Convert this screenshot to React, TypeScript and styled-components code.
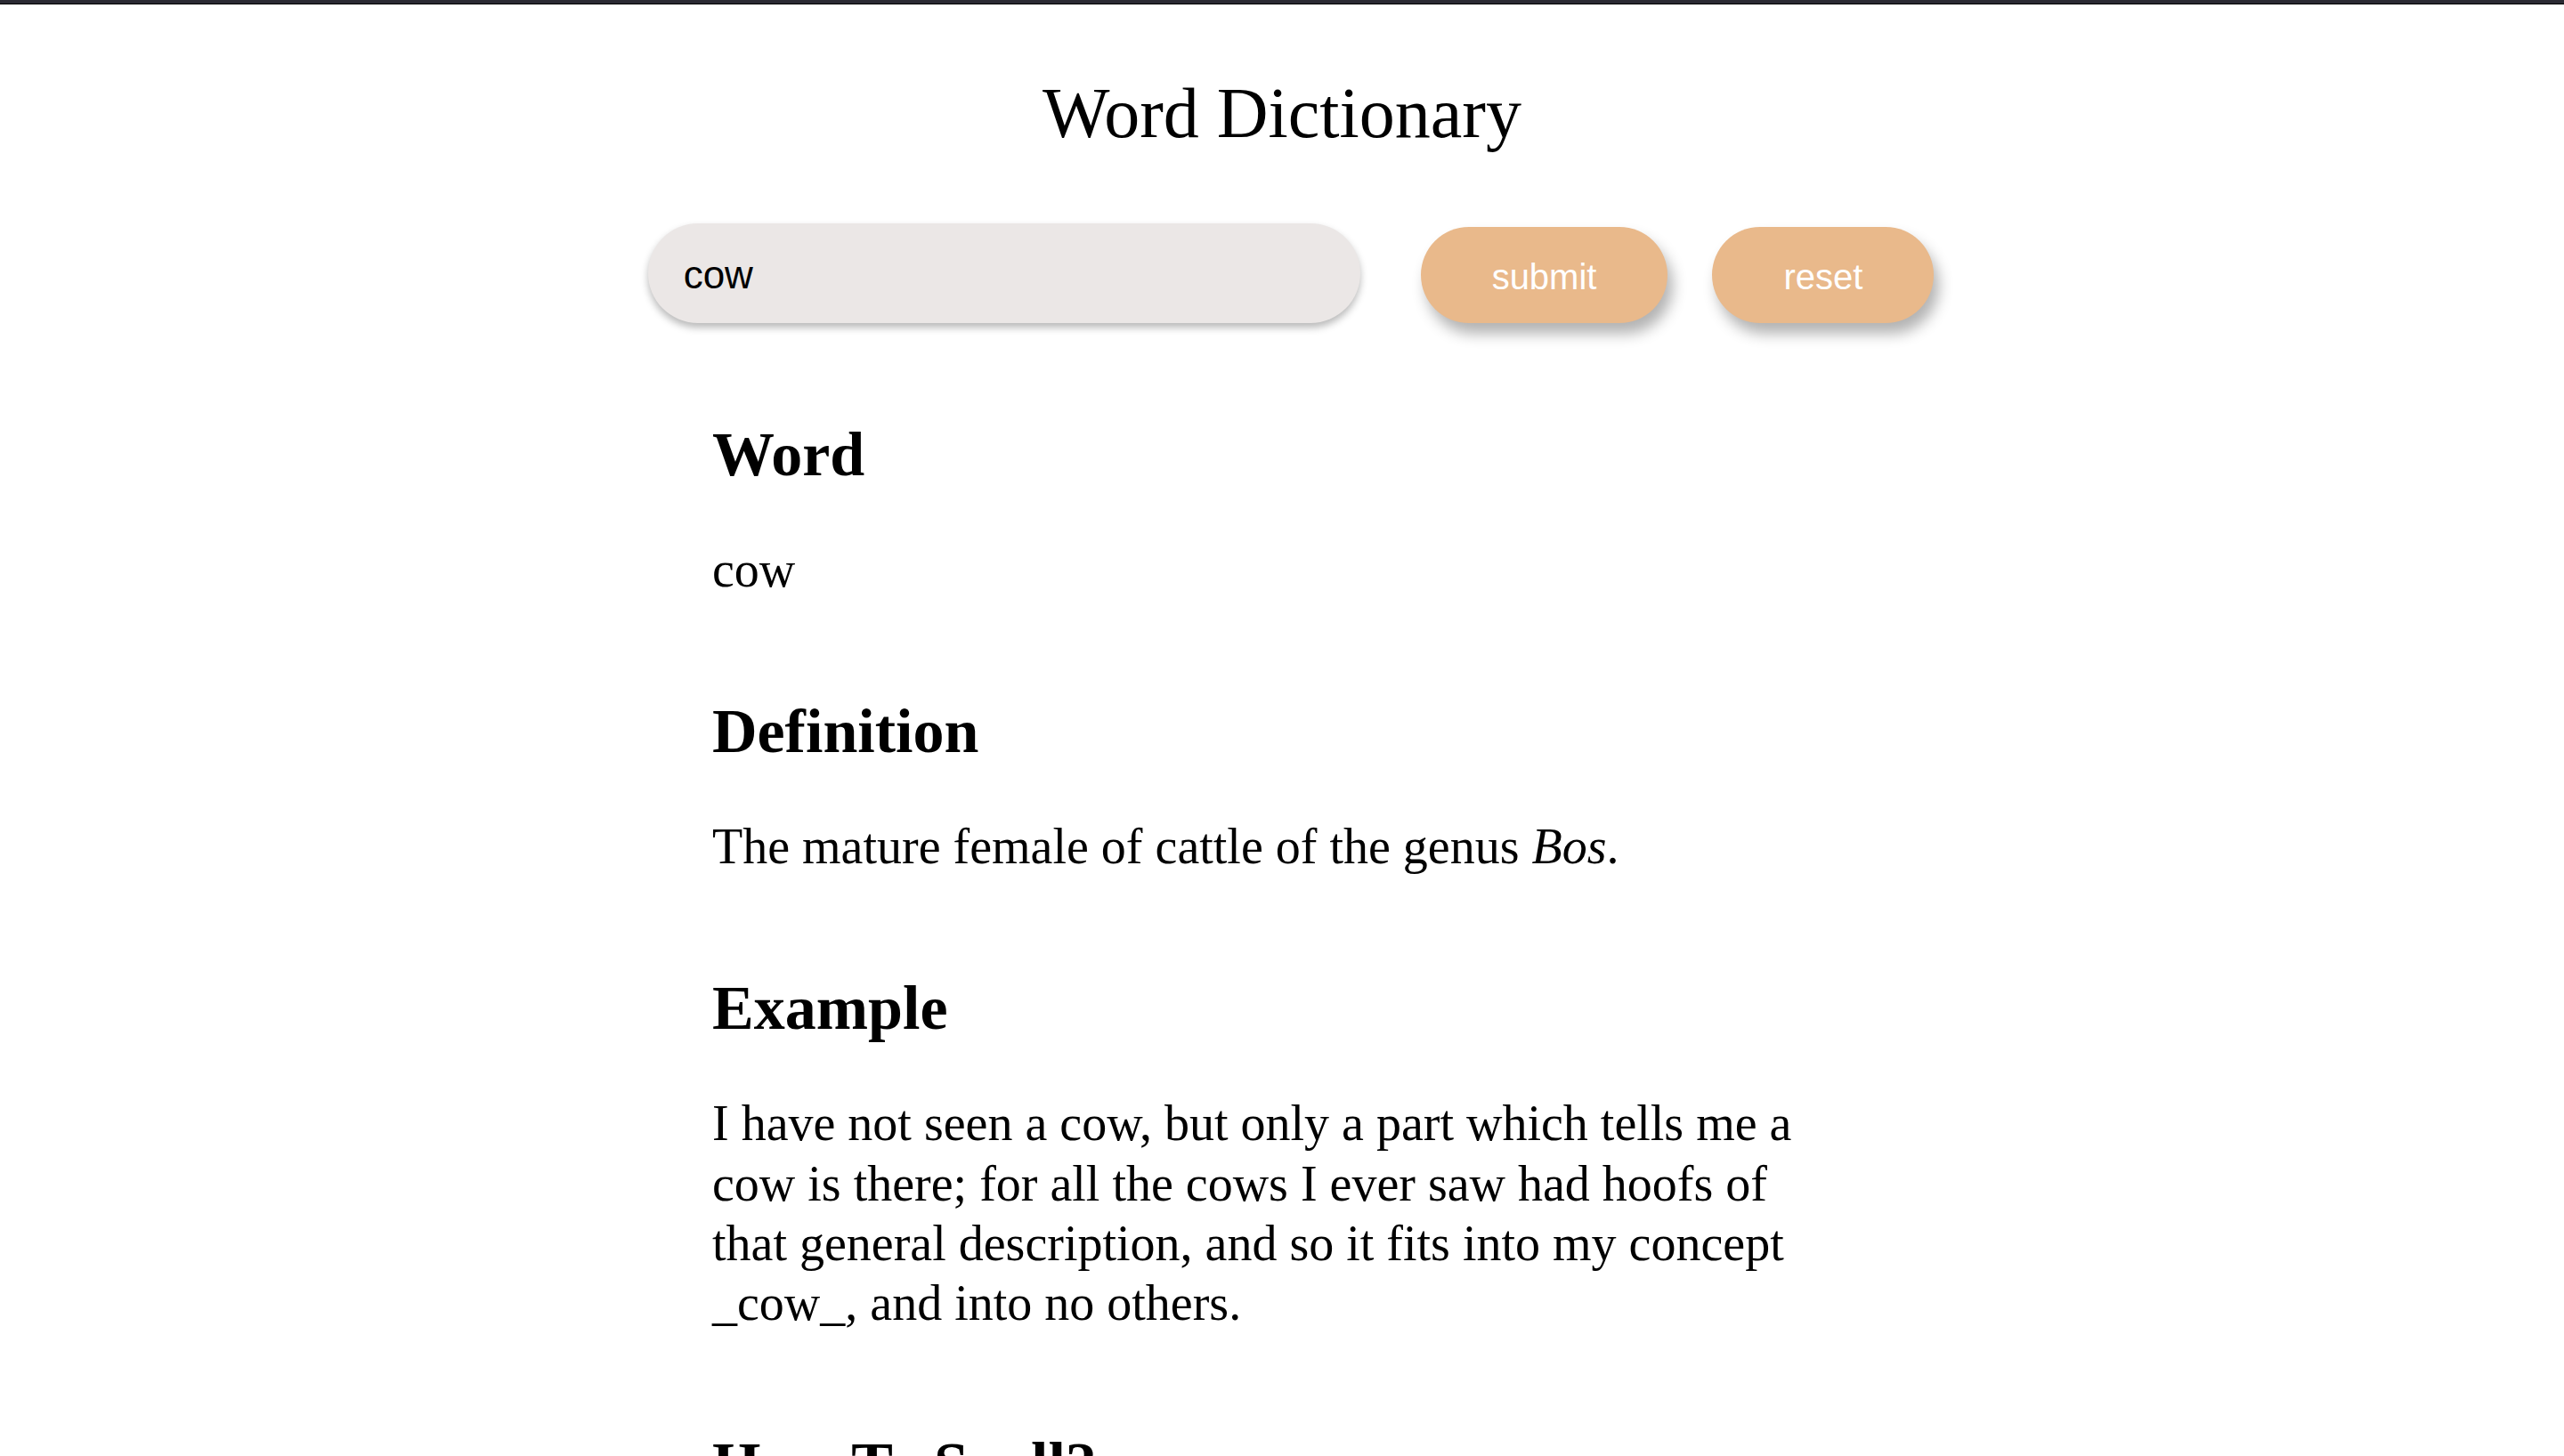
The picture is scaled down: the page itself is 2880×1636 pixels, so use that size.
import React from "react";
import styled, { createGlobalStyle } from "styled-components";

const GlobalStyle = createGlobalStyle`
  body {
    margin: 0;
    background: #ffffff;
    font-family: "Liberation Serif", "Times New Roman", serif;
    color: #000;
  }
`;

const TopBar = styled.div`
  height: 4px;
  background: #2b2a33;
  border-bottom: 1px solid #000;
`;

const Page = styled.main`
  display: flex;
  flex-direction: column;
  align-items: center;
`;

const Title = styled.h1`
  margin: 74px 0 0;
  font-size: 80px;
  font-weight: 400;
  line-height: 1.2;
`;

const SearchRow = styled.form`
  display: flex;
  align-items: flex-end;
  justify-content: center;
  margin-top: 76px;
  padding-left: 20px;
`;

const SearchInput = styled.input`
  width: 800px;
  height: 112px;
  box-sizing: border-box;
  padding: 4px 40px 0;
  border: none;
  border-radius: 56px;
  background: #ebe7e6;
  box-shadow: 0 5px 9px rgba(0, 0, 0, 0.28);
  font-family: "Liberation Sans", Arial, sans-serif;
  font-size: 44px;
  color: #000;
  outline: none;
`;

const PillButton = styled.button<{ $gap: number }>`
  margin-left: ${(p) => p.$gap}px;
  height: 108px;
  padding: 4px 80px 0;
  border: none;
  border-radius: 54px;
  background: #e9b98b;
  color: #fff;
  font-family: "Liberation Sans", Arial, sans-serif;
  font-size: 40px;
  box-shadow: 6px 12px 16px rgba(0, 0, 0, 0.3);
  cursor: pointer;
`;

const Results = styled.section`
  width: 1280px;
  box-sizing: border-box;
  padding-right: 20px;
  margin-top: 106px;
  display: flex;
  flex-direction: column;
  gap: 106px;
`;

const Entry = styled.div``;

const Heading = styled.h2`
  margin: 0 0 54px;
  font-size: 70px;
  font-weight: 700;
  line-height: 1.2;
`;

const Text = styled.p`
  margin: 0;
  font-size: 56px;
  line-height: 1.2;
`;

const App = () => (
  <>
    <GlobalStyle />
    <TopBar />
    <Page>
      <Title>Word Dictionary</Title>
      <SearchRow onSubmit={(e) => e.preventDefault()}>
        <SearchInput type="text" defaultValue="cow" />
        <PillButton $gap={68} type="submit">
          submit
        </PillButton>
        <PillButton $gap={50} type="reset">
          reset
        </PillButton>
      </SearchRow>
      <Results>
        <Entry>
          <Heading>Word</Heading>
          <Text>cow</Text>
        </Entry>
        <Entry>
          <Heading>Definition</Heading>
          <Text>
            The mature female of cattle of the genus <em>Bos</em>.
          </Text>
        </Entry>
        <Entry>
          <Heading>Example</Heading>
          <Text>
            I have not seen a cow, but only a part which tells me a cow is
            there; for all the cows I ever saw had hoofs of that general
            description, and so it fits into my concept _cow_, and into no
            others.
          </Text>
        </Entry>
        <Entry>
          <Heading>How To Spell?</Heading>
        </Entry>
      </Results>
    </Page>
  </>
);

export default App;
